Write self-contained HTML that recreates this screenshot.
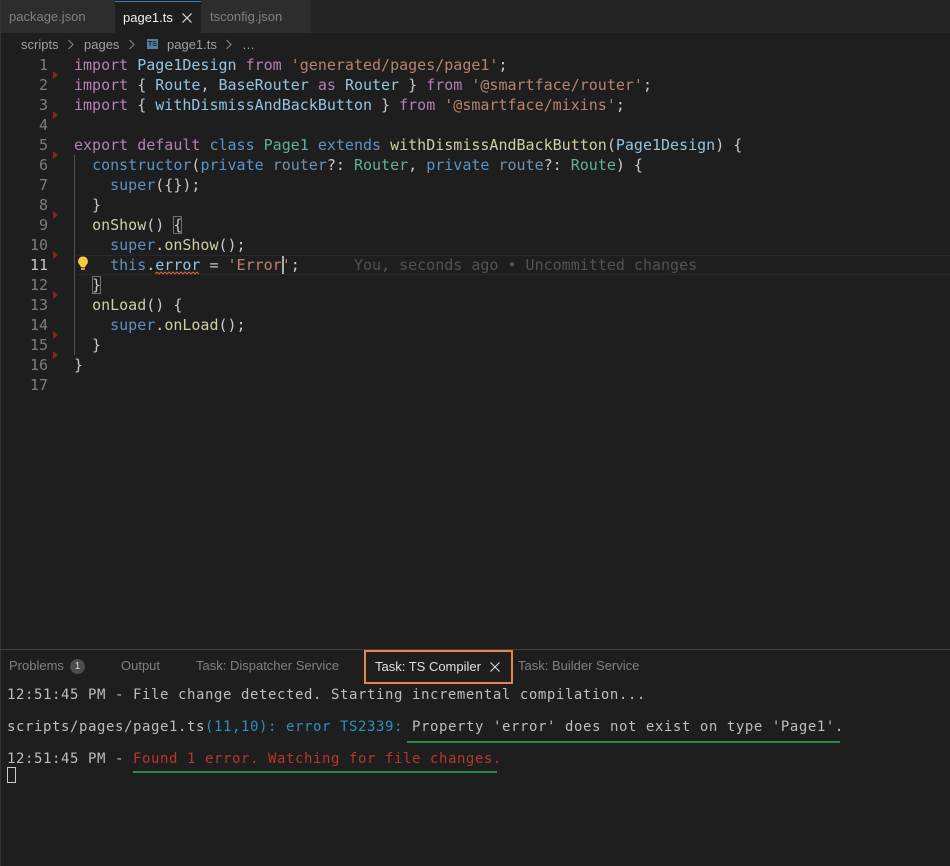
<!DOCTYPE html>
<html><head><meta charset="utf-8"><style>
html,body{margin:0;padding:0;background:#1e1e1e}
#r{position:relative;width:950px;height:866px;overflow:hidden;background:#1e1e1e;font-family:"Liberation Sans",sans-serif}
.a{position:absolute;white-space:pre}
.t{font-size:13px;line-height:16px}
.c{font-family:"DejaVu Sans Mono",monospace;font-size:15px;line-height:20px;color:#c8c8c8;left:74px}
.n{font-family:"DejaVu Sans Mono",monospace;font-size:15px;line-height:20px;color:#7d7d7d;width:48px;left:0;text-align:right}
.m{font-family:"DejaVu Sans Mono",monospace;font-size:14px;line-height:17px;letter-spacing:.57px;color:#bdbdbd;left:7px}
.g{width:0;height:0;left:53px;border-left:5px solid #8b2222;border-top:4px solid transparent;border-bottom:4px solid transparent}
i{font-style:normal}
.k{color:#b580b0}.b{color:#5a93c8}.v{color:#93c4e2}.s{color:#b9836e}.y{color:#cfcfa2}.e{color:#5fb09a}.u{color:#6d92b0}
</style></head><body><div id="r">
<div class="a" style="left:0;top:0;width:950px;height:33px;background:#252526"></div>
<div class="a" style="left:0;top:0;width:115px;height:33px;background:#2d2d2d"></div>
<div class="a" style="left:115px;top:0;width:86px;height:33px;background:#1e1e1e"></div>
<div class="a" style="left:115px;top:1px;width:86px;height:1px;background:#3f7fb8"></div>
<div class="a" style="left:201px;top:0;width:109px;height:33px;background:#2d2d2d"></div>
<div class="a" style="left:0;top:0;width:1px;height:866px;background:#333"></div>
<div class="a t" style="left:9px;top:9px;color:#808080">package.json</div>
<div class="a t" style="left:123px;top:10px;color:#f0f0f0">page1.ts</div>
<svg class="a" style="left:182px;top:13px" width="10" height="10"><path d="M.5.5l9 9M9.5.5l-9 9" stroke="#ddd" stroke-width="1.2" fill="none"/></svg>
<div class="a t" style="left:210px;top:9px;color:#808080">tsconfig.json</div>
<div class="a t" style="left:21px;top:37px;color:#a0a0a0">scripts</div>
<svg class="a" style="left:67px;top:39px" width="8" height="11"><path d="M1.5 1l4.500 4.500-4.500 4.500" stroke="#8c8c8c" fill="none"/></svg>
<div class="a t" style="left:84px;top:37px;color:#a0a0a0">pages</div>
<svg class="a" style="left:128px;top:39px" width="8" height="11"><path d="M1.5 1l4.500 4.500-4.500 4.500" stroke="#8c8c8c" fill="none"/></svg>
<div class="a" style="left:147px;top:39px;width:11px;height:10px;background:#4f7f9f;color:#1e1e1e;font:bold 7px/11px 'Liberation Sans',sans-serif;text-align:center">TS</div>
<div class="a t" style="left:167px;top:37px;color:#a0a0a0">page1.ts</div>
<svg class="a" style="left:225px;top:39px" width="8" height="11"><path d="M1.5 1l4.500 4.500-4.500 4.500" stroke="#8c8c8c" fill="none"/></svg>
<div class="a t" style="left:242px;top:37px;color:#a0a0a0">…</div>

<div class="a" style="left:76px;top:255px;width:874px;height:20px;box-sizing:border-box;border-top:1px solid #282828;border-bottom:1px solid #282828"></div>
<div class="a" style="left:74px;top:155px;width:1px;height:200px;background:#505050"></div>
<div class="a n" style="top:55px">1</div><div class="a n" style="top:75px">2</div><div class="a n" style="top:95px">3</div><div class="a n" style="top:115px">4</div><div class="a n" style="top:135px">5</div><div class="a n" style="top:155px">6</div><div class="a n" style="top:175px">7</div><div class="a n" style="top:195px">8</div><div class="a n" style="top:215px">9</div><div class="a n" style="top:235px">10</div><div class="a n" style="top:255px;color:#c6c6c6">11</div><div class="a n" style="top:275px">12</div><div class="a n" style="top:295px">13</div><div class="a n" style="top:315px">14</div><div class="a n" style="top:335px">15</div><div class="a n" style="top:355px">16</div><div class="a n" style="top:375px">17</div>
<div class="a g" style="top:71px"></div><div class="a g" style="top:111px"></div><div class="a g" style="top:151px"></div><div class="a g" style="top:211px"></div><div class="a g" style="top:251px"></div><div class="a g" style="top:291px"></div><div class="a g" style="top:331px"></div><div class="a g" style="top:351px"></div>

<div class="a c" style="top:55px"><i class="k">import</i> <i class="v">Page1Design</i> <i class="k">from</i> <i class="s">'generated/pages/page1'</i>;</div>
<div class="a c" style="top:75px"><i class="k">import</i> { <i class="v">Route</i>, <i class="v">BaseRouter</i> <i class="k">as</i> <i class="v">Router</i> } <i class="k">from</i> <i class="s">'@smartface/router'</i>;</div>
<div class="a c" style="top:95px"><i class="k">import</i> { <i class="v">withDismissAndBackButton</i> } <i class="k">from</i> <i class="s">'@smartface/mixins'</i>;</div>
<div class="a c" style="top:135px"><i class="k">export</i> <i class="k">default</i> <i class="b">class</i> <i class="e">Page1</i> <i class="b">extends</i> <i class="y">withDismissAndBackButton</i>(<i class="v">Page1Design</i>) {</div>
<div class="a c" style="top:155px">  <i class="b">constructor</i>(<i class="b">private</i> <i class="u">router</i>?: <i class="e">Router</i>, <i class="b">private</i> <i class="u">route</i>?: <i class="e">Route</i>) {</div>
<div class="a c" style="top:175px">    <i class="b">super</i>({});</div>
<div class="a c" style="top:195px">  }</div>
<div class="a c" style="top:215px">  <i class="y">onShow</i>() {</div>
<div class="a c" style="top:235px">    <i class="b">super</i>.<i class="y">onShow</i>();</div>
<div class="a c" style="top:255px">    <i class="b">this</i>.<i class="v">error</i> = <i class="s">'Error'</i>;      <i style="color:#525252">You, seconds ago • Uncommitted changes</i></div>
<div class="a c" style="top:275px">  }</div>
<div class="a c" style="top:295px">  <i class="y">onLoad</i>() {</div>
<div class="a c" style="top:315px">    <i class="b">super</i>.<i class="y">onLoad</i>();</div>
<div class="a c" style="top:335px">  }</div>
<div class="a c" style="top:355px">}</div>

<div class="a" style="left:173px;top:216px;width:9px;height:18px;border:1px solid #707070;box-sizing:border-box"></div>
<div class="a" style="left:92px;top:276px;width:9px;height:18px;border:1px solid #707070;box-sizing:border-box"></div>
<div class="a" style="left:282px;top:256px;width:2px;height:18px;background:#aeafad"></div>
<svg class="a" style="left:155px;top:271px" width="46" height="4"><path d="M0 3l2-2 2 2 2-2 2 2 2-2 2 2 2-2 2 2 2-2 2 2 2-2 2 2 2-2 2 2 2-2 2 2 2-2 2 2 2-2 2 2 2-2 2 2" stroke="#d9634a" fill="none"/></svg>
<svg class="a" style="left:77px;top:256px" width="12" height="15"><path d="M6 .5a4.900 4.900 0 0 0-3.300 8.500c.7.700 1 1.300 1 2h4.600c0-.7.300-1.300 1-2a4.900 4.900 0 0 0-3.300-8.500z" fill="#f7cc3c"/><rect x="4" y="11.500" width="4" height="2.500" fill="#c9a52e"/></svg>

<div class="a" style="left:0;top:649px;width:950px;height:1px;background:#414141"></div>
<div class="a t" style="left:9px;top:658px;color:#808080">Problems</div>
<div class="a" style="left:70px;top:659px;width:15px;height:15px;border-radius:50%;background:#4d4d4d;color:#ddd;font-size:10px;line-height:15px;text-align:center">1</div>
<div class="a t" style="left:121px;top:658px;color:#808080">Output</div>
<div class="a t" style="left:196px;top:658px;color:#808080">Task: Dispatcher Service</div>
<div class="a" style="left:364px;top:650px;width:149px;height:34px;box-sizing:border-box;border:2px solid #e8834a"></div>
<div class="a t" style="left:375px;top:659px;color:#e0e0e0">Task: TS Compiler</div>
<svg class="a" style="left:490px;top:662px" width="10" height="10"><path d="M.5.500l9 9M9.500.500l-9 9" stroke="#ddd" stroke-width="1.100" fill="none"/></svg>
<div class="a t" style="left:518px;top:658px;color:#808080">Task: Builder Service</div>

<div class="a m" style="top:687px">12:51:45 PM - File change detected. Starting incremental compilation...</div>
<div class="a m" style="top:719px">scripts/pages/page1.ts<i style="color:#2e8fc0">(11,10): error TS2339: </i>Property 'error' does not exist on type 'Page1'.</div>
<div class="a m" style="top:751px">12:51:45 PM - <i style="color:#b8372e">Found 1 error. Watching for file changes.</i></div>
<div class="a" style="left:407px;top:741px;width:433px;height:2px;background:#2e8b4f"></div>
<div class="a" style="left:133px;top:771px;width:364px;height:2px;background:#2e8b4f"></div>
<div class="a" style="left:7px;top:767px;width:9px;height:16px;box-sizing:border-box;border:1px solid #ccc"></div>
</div></body></html>
